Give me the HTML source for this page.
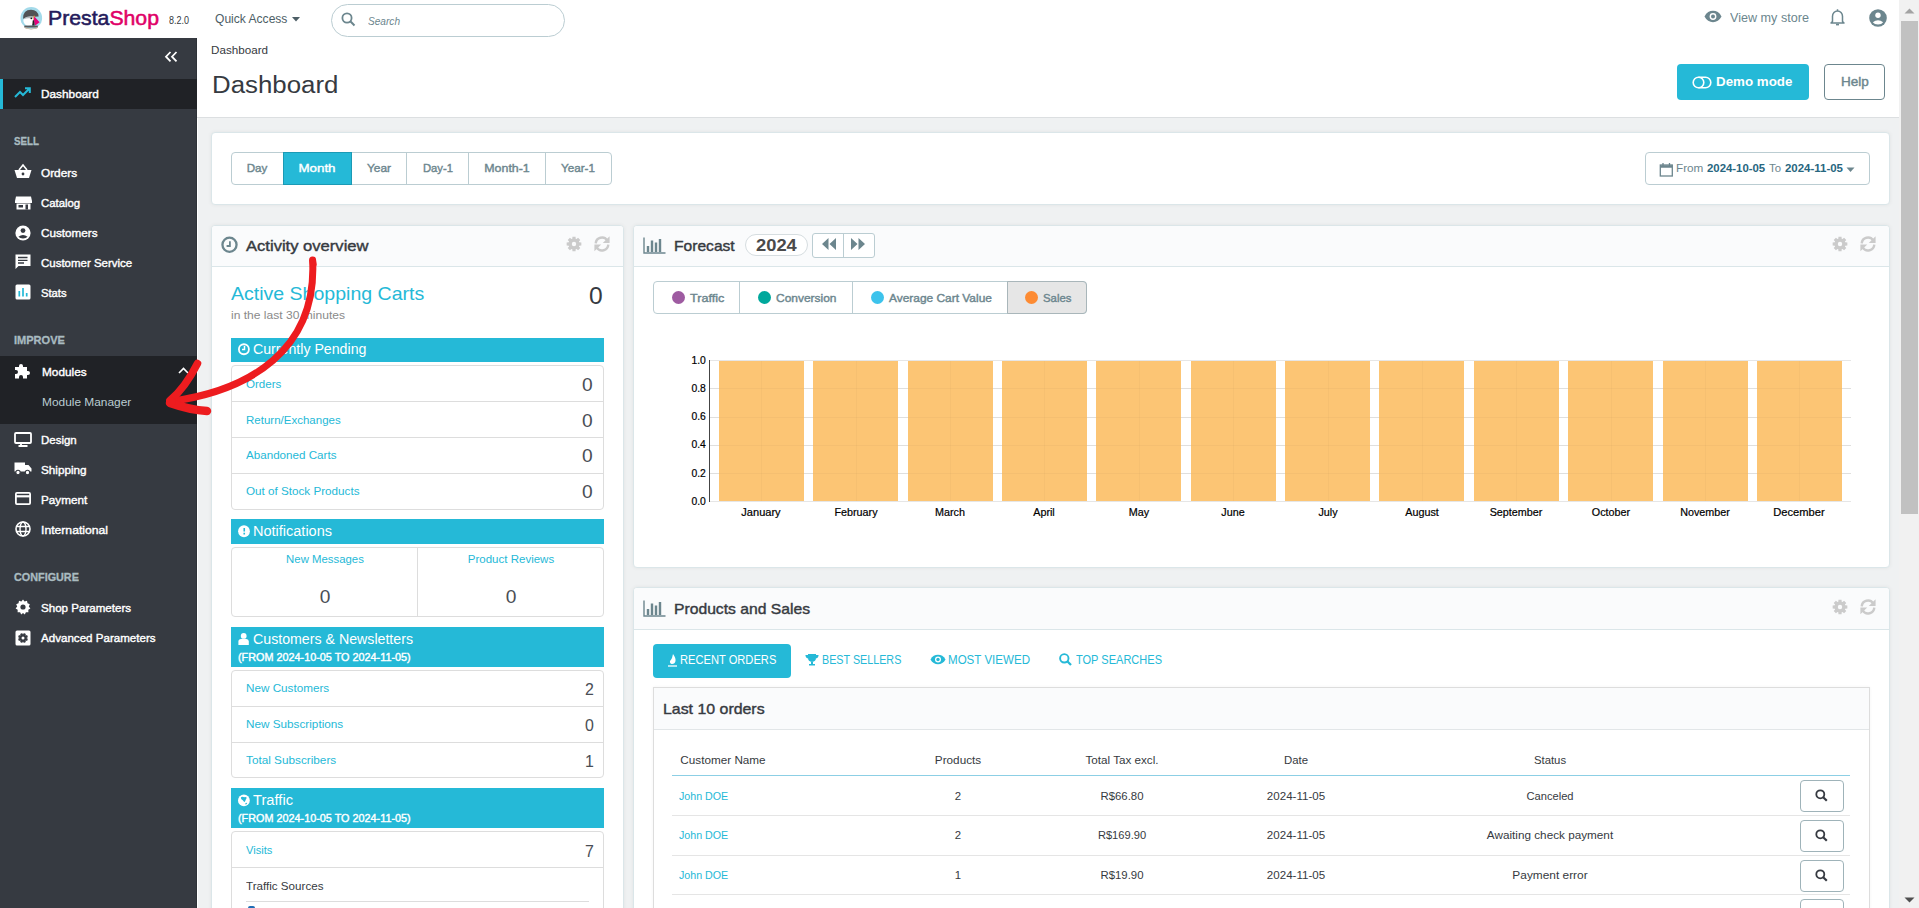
<!DOCTYPE html>
<html><head><meta charset="utf-8"><style>
*{margin:0;padding:0;box-sizing:border-box;}
html,body{width:1919px;height:908px;overflow:hidden;background:#eff1f2;font-family:"Liberation Sans",sans-serif;}
#root{position:relative;width:1919px;height:908px;overflow:hidden;background:#eff1f2;}
.t{position:absolute;white-space:nowrap;line-height:1;}
.ab{position:absolute;}
svg{position:absolute;overflow:visible;}

</style></head><body>
<div id="root">
<div class="ab" style="left:0px;top:0px;width:1899px;height:38px;background:#fff;"></div>
<div class="ab" style="left:197px;top:38px;width:1702px;height:79px;background:#fff;"></div>
<div class="ab" style="left:197px;top:117px;width:1702px;height:1px;background:#dcdfe1;"></div>
<div class="ab" style="left:197px;top:118px;width:1px;height:790px;background:#fff;"></div>
<div class="ab" style="left:0px;top:38px;width:197px;height:870px;background:#363a41;"></div>
<div class="ab" style="left:196px;top:38px;width:1px;height:870px;background:#2e3238;"></div>
<div class="ab" style="left:0px;top:79px;width:197px;height:30px;background:#202226;"></div>
<div class="ab" style="left:0px;top:79px;width:3px;height:30px;background:#25b9d7;"></div>
<div class="ab" style="left:0px;top:356px;width:197px;height:68px;background:#202226;"></div>
<div class="ab" style="left:331px;top:4px;width:234px;height:33px;border:1px solid #bbcdd2;border-radius:17px;background:#fff;"></div>
<div class="ab" style="left:1677px;top:64px;width:132px;height:36px;background:#25b9d7;border-radius:4px;"></div>
<div class="ab" style="left:1824px;top:64px;width:61px;height:36px;border:1px solid #6c868e;border-radius:4px;"></div>
<div class="ab" style="left:211px;top:132px;width:1679px;height:73px;border:1px solid #dbe6e9;border-radius:4px;background:#fff;box-shadow:0 0 4px rgba(0,0,0,.06);"></div>
<div class="ab" style="left:231px;top:152px;width:381px;height:33px;border:1px solid #bbcdd2;border-radius:4px;"></div>
<div class="ab" style="left:283px;top:152px;width:69px;height:33px;background:#25b9d7;border:1px solid #1b9ab5;"></div>
<div class="ab" style="left:406px;top:153px;width:1px;height:31px;background:#bbcdd2;"></div>
<div class="ab" style="left:468px;top:153px;width:1px;height:31px;background:#bbcdd2;"></div>
<div class="ab" style="left:545px;top:153px;width:1px;height:31px;background:#bbcdd2;"></div>
<div class="ab" style="left:1645px;top:152px;width:225px;height:33px;border:1px solid #bbcdd2;border-radius:4px;"></div>
<div class="ab" style="left:211px;top:225px;width:413px;height:700px;border:1px solid #dbe6e9;border-radius:4px;background:#fff;box-shadow:0 0 4px rgba(0,0,0,.06);"></div>
<div class="ab" style="left:212px;top:226px;width:411px;height:40px;background:#fafbfc;border-radius:3px 3px 0 0;"></div>
<div class="ab" style="left:212px;top:266px;width:411px;height:1px;background:#dbe6e9;"></div>
<div class="ab" style="left:231px;top:338px;width:373px;height:24px;background:#25b9d7;"></div>
<div class="ab" style="left:231px;top:365px;width:373px;height:145px;border:1px solid #dddddd;border-radius:4px;background:#fff;"></div>
<div class="ab" style="left:232px;top:401px;width:371px;height:1px;background:#dddddd;"></div>
<div class="ab" style="left:232px;top:437px;width:371px;height:1px;background:#dddddd;"></div>
<div class="ab" style="left:232px;top:473px;width:371px;height:1px;background:#dddddd;"></div>
<div class="ab" style="left:231px;top:519px;width:373px;height:25px;background:#25b9d7;"></div>
<div class="ab" style="left:231px;top:547px;width:373px;height:70px;border:1px solid #dddddd;border-radius:4px;background:#fff;"></div>
<div class="ab" style="left:417px;top:548px;width:1px;height:68px;background:#dddddd;"></div>
<div class="ab" style="left:231px;top:627px;width:373px;height:40px;background:#25b9d7;"></div>
<div class="ab" style="left:231px;top:670px;width:373px;height:108px;border:1px solid #dddddd;border-radius:4px;background:#fff;"></div>
<div class="ab" style="left:232px;top:706px;width:371px;height:1px;background:#dddddd;"></div>
<div class="ab" style="left:232px;top:742px;width:371px;height:1px;background:#dddddd;"></div>
<div class="ab" style="left:231px;top:788px;width:373px;height:40px;background:#25b9d7;"></div>
<div class="ab" style="left:231px;top:831px;width:373px;height:200px;border:1px solid #dddddd;border-radius:4px;background:#fff;"></div>
<div class="ab" style="left:232px;top:867px;width:371px;height:1px;background:#dddddd;"></div>
<div class="ab" style="left:246px;top:901px;width:343px;height:1px;background:#dddddd;"></div>
<div class="ab" style="left:633px;top:225px;width:1257px;height:343px;border:1px solid #dbe6e9;border-radius:4px;background:#fff;box-shadow:0 0 4px rgba(0,0,0,.06);"></div>
<div class="ab" style="left:634px;top:226px;width:1255px;height:40px;background:#fafbfc;border-radius:3px 3px 0 0;"></div>
<div class="ab" style="left:634px;top:266px;width:1255px;height:1px;background:#dbe6e9;"></div>
<div class="ab" style="left:745px;top:234px;width:63px;height:22px;border:1px solid #d6dde0;border-radius:11px;background:#fff;"></div>
<div class="ab" style="left:812px;top:233px;width:63px;height:25px;border:1px solid #bbcdd2;border-radius:3px;background:#fff;"></div>
<div class="ab" style="left:843px;top:234px;width:1px;height:23px;background:#bbcdd2;"></div>
<div class="ab" style="left:653px;top:281px;width:434px;height:33px;border:1px solid #bbcdd2;border-radius:4px;background:#fff;"></div>
<div class="ab" style="left:1007px;top:282px;width:79px;height:31px;background:#e6e6e6;border-left:1px solid #a9b6ba;border-radius:0 3px 3px 0;"></div>
<div class="ab" style="left:1007px;top:281px;width:80px;height:33px;border:1px solid #a9b6ba;border-radius:0 4px 4px 0;"></div>
<div class="ab" style="left:739px;top:282px;width:1px;height:31px;background:#bbcdd2;"></div>
<div class="ab" style="left:852px;top:282px;width:1px;height:31px;background:#bbcdd2;"></div>
<div class="ab" style="left:671.8px;top:290.5px;width:13px;height:13px;background:#9e5ba1;border-radius:50%;"></div>
<div class="ab" style="left:758.0px;top:290.5px;width:13px;height:13px;background:#00a89c;border-radius:50%;"></div>
<div class="ab" style="left:871.0px;top:290.5px;width:13px;height:13px;background:#3dc3ec;border-radius:50%;"></div>
<div class="ab" style="left:1025.0px;top:290.5px;width:13px;height:13px;background:#fd8b33;border-radius:50%;"></div>
<div class="ab" style="left:710px;top:360px;width:1141px;height:1px;background:#e6e6e6;"></div>
<div class="ab" style="left:710px;top:388px;width:1141px;height:1px;background:#e6e6e6;"></div>
<div class="ab" style="left:710px;top:417px;width:1141px;height:1px;background:#e6e6e6;"></div>
<div class="ab" style="left:710px;top:445px;width:1141px;height:1px;background:#e6e6e6;"></div>
<div class="ab" style="left:710px;top:473px;width:1141px;height:1px;background:#e6e6e6;"></div>
<div class="ab" style="left:710px;top:501px;width:1141px;height:1px;background:#e6e6e6;"></div>
<div class="ab" style="left:718.7px;top:361px;width:85px;height:140px;background:#fcc574;"></div>
<div class="ab" style="left:761px;top:361px;width:1px;height:140px;background:rgba(0,0,0,.025);"></div>
<div class="ab" style="left:813.1px;top:361px;width:85px;height:140px;background:#fcc574;"></div>
<div class="ab" style="left:856px;top:361px;width:1px;height:140px;background:rgba(0,0,0,.025);"></div>
<div class="ab" style="left:907.5px;top:361px;width:85px;height:140px;background:#fcc574;"></div>
<div class="ab" style="left:950px;top:361px;width:1px;height:140px;background:rgba(0,0,0,.025);"></div>
<div class="ab" style="left:1001.9px;top:361px;width:85px;height:140px;background:#fcc574;"></div>
<div class="ab" style="left:1044px;top:361px;width:1px;height:140px;background:rgba(0,0,0,.025);"></div>
<div class="ab" style="left:1096.3px;top:361px;width:85px;height:140px;background:#fcc574;"></div>
<div class="ab" style="left:1139px;top:361px;width:1px;height:140px;background:rgba(0,0,0,.025);"></div>
<div class="ab" style="left:1190.7px;top:361px;width:85px;height:140px;background:#fcc574;"></div>
<div class="ab" style="left:1233px;top:361px;width:1px;height:140px;background:rgba(0,0,0,.025);"></div>
<div class="ab" style="left:1285.0px;top:361px;width:85px;height:140px;background:#fcc574;"></div>
<div class="ab" style="left:1328px;top:361px;width:1px;height:140px;background:rgba(0,0,0,.025);"></div>
<div class="ab" style="left:1379.4px;top:361px;width:85px;height:140px;background:#fcc574;"></div>
<div class="ab" style="left:1422px;top:361px;width:1px;height:140px;background:rgba(0,0,0,.025);"></div>
<div class="ab" style="left:1473.8px;top:361px;width:85px;height:140px;background:#fcc574;"></div>
<div class="ab" style="left:1516px;top:361px;width:1px;height:140px;background:rgba(0,0,0,.025);"></div>
<div class="ab" style="left:1568.2px;top:361px;width:85px;height:140px;background:#fcc574;"></div>
<div class="ab" style="left:1611px;top:361px;width:1px;height:140px;background:rgba(0,0,0,.025);"></div>
<div class="ab" style="left:1662.6px;top:361px;width:85px;height:140px;background:#fcc574;"></div>
<div class="ab" style="left:1705px;top:361px;width:1px;height:140px;background:rgba(0,0,0,.025);"></div>
<div class="ab" style="left:1757.0px;top:361px;width:85px;height:140px;background:#fcc574;"></div>
<div class="ab" style="left:1799px;top:361px;width:1px;height:140px;background:rgba(0,0,0,.025);"></div>
<div class="ab" style="left:710px;top:388px;width:1141px;height:1px;background:rgba(120,100,60,.05);"></div>
<div class="ab" style="left:710px;top:417px;width:1141px;height:1px;background:rgba(120,100,60,.05);"></div>
<div class="ab" style="left:710px;top:445px;width:1141px;height:1px;background:rgba(120,100,60,.05);"></div>
<div class="ab" style="left:710px;top:473px;width:1141px;height:1px;background:rgba(120,100,60,.05);"></div>
<div class="ab" style="left:709px;top:360px;width:1px;height:142px;background:#444;"></div>
<div class="ab" style="left:633px;top:587px;width:1257px;height:400px;border:1px solid #dbe6e9;border-radius:4px;background:#fff;box-shadow:0 0 4px rgba(0,0,0,.06);"></div>
<div class="ab" style="left:634px;top:588px;width:1255px;height:41px;background:#fafbfc;border-radius:3px 3px 0 0;"></div>
<div class="ab" style="left:634px;top:629px;width:1255px;height:1px;background:#dbe6e9;"></div>
<div class="ab" style="left:653px;top:644px;width:138px;height:34px;background:#25b9d7;border-radius:4px;"></div>
<div class="ab" style="left:653px;top:687px;width:1217px;height:300px;border:1px solid #dddddd;background:#fff;box-shadow:0 0 3px rgba(0,0,0,.05);"></div>
<div class="ab" style="left:654px;top:688px;width:1215px;height:41px;background:#fafbfc;"></div>
<div class="ab" style="left:654px;top:729px;width:1215px;height:1px;background:#e2e6e8;"></div>
<div class="ab" style="left:672px;top:775px;width:1178px;height:1px;background:#8ccfe5;"></div>
<div class="ab" style="left:672px;top:815px;width:1178px;height:1px;background:#e5e5e5;"></div>
<div class="ab" style="left:672px;top:855px;width:1178px;height:1px;background:#e5e5e5;"></div>
<div class="ab" style="left:672px;top:894px;width:1178px;height:1px;background:#e5e5e5;"></div>
<div class="ab" style="left:1800px;top:780px;width:44px;height:32px;border:1px solid #9fb3b9;border-radius:4px;background:#fff;"></div>
<div class="ab" style="left:1800px;top:820px;width:44px;height:32px;border:1px solid #9fb3b9;border-radius:4px;background:#fff;"></div>
<div class="ab" style="left:1800px;top:860px;width:44px;height:32px;border:1px solid #9fb3b9;border-radius:4px;background:#fff;"></div>
<div class="ab" style="left:1800px;top:899px;width:44px;height:32px;border:1px solid #9fb3b9;border-radius:4px;background:#fff;"></div>
<div class="ab" style="left:1899px;top:0px;width:20px;height:908px;background:#f1f1f1;"></div>
<div class="ab" style="left:1901px;top:21px;width:17px;height:493px;background:#c1c1c1;"></div><svg style="left:18px;top:5px" width="26" height="26" viewBox="0 0 26 26"><circle cx="13.3" cy="12.9" r="10.8" fill="#a3daea"/>
<path d="M5 13.8 Q5 4.8 13 4.8 Q20 4.8 20.6 11.5 L16 11.8 Q11 10.5 5 13.8Z" fill="#505254"/>
<path d="M6 13.2 Q10.5 10.3 16 11.6 L15.5 14.5 Q10 12.8 6 14.5Z" fill="#b9bcbe"/>
<path d="M5.3 14.5 Q10 12.3 15.2 13.8 L15.6 18.5 Q14 21.2 9.5 20.8 Q5.3 19.5 5.3 14.5Z" fill="#ffffff"/>
<path d="M6.3 20.6 H19.8 V22.5 H6.3Z" fill="#57595b"/>
<path d="M6.5 22.3 Q13 25 20 22.3 L19 23.6 Q13 25.2 7.5 23.6Z" fill="#b9a78c"/>
<circle cx="13.3" cy="13.4" r="0.8" fill="#111"/>
<path d="M15.5 10.8H16.9V15H15.5Z" fill="#f0973c"/>
<path d="M14.8 15.2H16.6V20.5H14.2Z" fill="#222"/>
<path d="M16.4 11.4 L21.6 17.2 L17.2 20.6 L15.9 15Z" fill="#e4007a"/></svg>
<svg style="left:292px;top:17px" width="8" height="5" viewBox="0 0 8 5"><path d="M0 0H8L4 4.5Z" fill="#4d5e66"/></svg>
<svg style="left:341px;top:12px" width="15" height="15" viewBox="0 0 15 15"><circle cx="6" cy="6" r="4.6" fill="none" stroke="#6c868e" stroke-width="1.8"/><path d="M9.3 9.3L13.5 13.5" stroke="#6c868e" stroke-width="2"/></svg>
<svg style="left:1704px;top:10px" width="18" height="13" viewBox="0 0 18 13"><path d="M0.5 6.5C2.5 2.5 5.5 0.8 9 0.8S15.5 2.5 17.5 6.5C15.5 10.5 12.5 12.2 9 12.2S2.5 10.5 0.5 6.5Z" fill="#6c868e"/><circle cx="9" cy="6.5" r="3.4" fill="#fff"/><circle cx="9" cy="6.5" r="2" fill="#6c868e"/></svg>
<svg style="left:1830px;top:8px" width="15" height="18" viewBox="0 0 15 18"><path d="M7.5 1.3V2.7M2.5 13.5V8.2A5 5.3 0 0 1 12.5 8.2V13.5L14 15H1Z" fill="none" stroke="#6c868e" stroke-width="1.5" stroke-linejoin="round"/><path d="M6 16.6H9" stroke="#6c868e" stroke-width="1.6"/></svg>
<svg style="left:1869px;top:9px" width="18" height="18" viewBox="0 0 18 18"><circle cx="9" cy="9" r="8.8" fill="#6c868e"/><circle cx="9" cy="6.3" r="2.7" fill="#fff"/><path d="M3.8 13.2Q9 9.5 14.2 13.2Q12.5 15.6 9 15.6Q5.5 15.6 3.8 13.2Z" fill="#fff"/></svg>
<svg style="left:164px;top:51px" width="14" height="12" viewBox="0 0 14 12"><path d="M6.5 1L2 5.7L6.5 10.4M12.5 1L8 5.7L12.5 10.4" fill="none" stroke="#fff" stroke-width="1.8"/></svg>
<svg style="left:14px;top:87px" width="17" height="11" viewBox="0 0 17 11"><path d="M1 10L6 5L9 8L15 2M11 1.2H15.8V6" fill="none" stroke="#25b9d7" stroke-width="2"/></svg>
<svg style="left:14px;top:164px" width="18" height="15" viewBox="0 0 18 15"><path d="M5 6L9 1L13 6" fill="none" stroke="#fff" stroke-width="1.6"/><path d="M0.5 6H17.5L15 14H3Z" fill="#fff"/><circle cx="9" cy="10" r="1.4" fill="#363a41"/></svg>
<svg style="left:15px;top:196px" width="17" height="14" viewBox="0 0 17 14"><path d="M1 0.5H16L17 5V7H0V5Z" fill="#fff"/><path d="M1.5 7.5H15.5V13.5H1.5Z" fill="#fff"/><path d="M3.5 9H8V11.5H3.5Z M10.5 8.5H13V13.5H10.5Z" fill="#363a41"/></svg>
<svg style="left:15px;top:225px" width="16" height="16" viewBox="0 0 16 16"><circle cx="8" cy="8" r="7.6" fill="#fff"/><circle cx="8" cy="5.6" r="2.4" fill="#363a41"/><path d="M3.4 11.8Q8 8.3 12.6 11.8Q11 13.6 8 13.6Q5 13.6 3.4 11.8Z" fill="#363a41"/></svg>
<svg style="left:15px;top:254px" width="16" height="16" viewBox="0 0 16 16"><path d="M0.5 0.5H15.5V12H3.5L0.5 15Z" fill="#fff"/><path d="M3 3.5H12.5M3 6.3H12.5M3 9H9" stroke="#363a41" stroke-width="1.3"/></svg>
<svg style="left:15px;top:284px" width="16" height="16" viewBox="0 0 16 16"><rect x="0.5" y="0.5" width="15" height="15" rx="1.5" fill="#fff"/><path d="M4.3 7V12.5M8 4V12.5M11.7 9V12.5" stroke="#25b9d7" stroke-width="1.7"/></svg>
<svg style="left:14px;top:363px" width="18" height="16" viewBox="0 0 18 16"><path d="M1 4H5V3A2 2 0 0 1 9 3V4H13V8H14A2 2 0 0 1 14 12H13V15.5H9V14A2 2 0 0 0 5 14V15.5H1V11H2A2 2 0 0 0 2 7H1Z" fill="#fff"/></svg>
<svg style="left:178px;top:367px" width="11" height="7" viewBox="0 0 11 7"><path d="M1 6L5.5 1.5L10 6" fill="none" stroke="#fff" stroke-width="1.6"/></svg>
<svg style="left:14px;top:432px" width="18" height="15" viewBox="0 0 18 15"><rect x="1" y="1" width="16" height="10" rx="1" fill="none" stroke="#fff" stroke-width="1.8"/><path d="M7 11.5V13M4.5 14H13.5" stroke="#fff" stroke-width="1.8"/></svg>
<svg style="left:14px;top:461px" width="18" height="15" viewBox="0 0 18 15"><path d="M0.5 1.5H11V10.5H0.5Z M11 4H14.5L17.5 7.5V10.5H11Z" fill="#fff"/><circle cx="4" cy="11.5" r="2.2" fill="#fff" stroke="#363a41" stroke-width="1.1"/><circle cx="13.5" cy="11.5" r="2.2" fill="#fff" stroke="#363a41" stroke-width="1.1"/></svg>
<svg style="left:15px;top:492px" width="16" height="13" viewBox="0 0 16 13"><rect x="0.9" y="0.9" width="14.2" height="11.2" rx="1" fill="none" stroke="#fff" stroke-width="1.8"/><path d="M1 4.3H15" stroke="#fff" stroke-width="2.2"/></svg>
<svg style="left:15px;top:521px" width="16" height="16" viewBox="0 0 16 16"><circle cx="8" cy="8" r="7" fill="none" stroke="#fff" stroke-width="1.6"/><ellipse cx="8" cy="8" rx="3" ry="7" fill="none" stroke="#fff" stroke-width="1.4"/><path d="M1.5 5.5H14.5M1.5 10.5H14.5" stroke="#fff" stroke-width="1.4"/></svg>
<svg style="left:15px;top:599px" width="16" height="16" viewBox="0 0 16 16"><path d="M8 0.5L9.6 2.5L12 1.8L12.5 4.3L14.8 5.2L13.8 7.5L15.4 9.5L13.3 10.8L13.4 13.3L10.9 13.3L9.8 15.5L8 14L6.2 15.5L5.1 13.3L2.6 13.3L2.7 10.8L0.6 9.5L2.2 7.5L1.2 5.2L3.5 4.3L4 1.8L6.4 2.5Z" fill="#fff"/><circle cx="8" cy="8" r="2.6" fill="#363a41"/></svg>
<svg style="left:15px;top:630px" width="16" height="16" viewBox="0 0 16 16"><rect x="0.5" y="0.5" width="15" height="15" rx="1.5" fill="#fff"/><path d="M8.23 4.31L8.86 3.07L10.88 3.91L10.45 5.22L10.78 5.55L12.09 5.12L12.93 7.14L11.69 7.77L11.69 8.23L12.93 8.86L12.09 10.88L10.78 10.45L10.45 10.78L10.88 12.09L8.86 12.93L8.23 11.69L7.77 11.69L7.14 12.93L5.12 12.09L5.55 10.78L5.22 10.45L3.91 10.88L3.07 8.86L4.31 8.23L4.31 7.77L3.07 7.14L3.91 5.12L5.22 5.55L5.55 5.22L5.12 3.91L7.14 3.07L7.77 4.31Z" fill="#363a41"/><circle cx="8" cy="8" r="1.5" fill="#fff"/></svg>
<svg style="left:1692px;top:76px" width="20" height="13" viewBox="0 0 20 13"><circle cx="6.5" cy="6.5" r="5.3" fill="none" stroke="#fff" stroke-width="1.6"/><path d="M6.5 1.2H13.5A5.3 5.3 0 0 1 13.5 11.8H6.5" fill="none" stroke="#fff" stroke-width="1.6"/></svg>
<svg style="left:1659px;top:162px" width="15" height="15" viewBox="0 0 15 15"><rect x="1.3" y="3" width="12" height="11" fill="none" stroke="#6c868e" stroke-width="1.3"/><path d="M1.3 4.5H13.3" stroke="#6c868e" stroke-width="2.5"/><path d="M4 1V4M10.5 1V4" stroke="#6c868e" stroke-width="1.3"/></svg>
<svg style="left:1846px;top:167px" width="9" height="6" viewBox="0 0 9 6"><path d="M0.5 0.5H8.5L4.5 5Z" fill="#6c868e"/></svg>
<svg style="left:220px;top:235px" width="20" height="20" viewBox="0 0 20 20"><circle cx="9.5" cy="9.75" r="7.05" fill="none" stroke="#6c868e" stroke-width="2.3"/><path d="M9.9 6.2V11H6.6" fill="none" stroke="#6c868e" stroke-width="1.8"/></svg>
<svg style="left:566px;top:236px" width="16" height="16" viewBox="0 0 16 16"><path d="M6.32 2.76L6.44 0.66L9.56 0.66L9.68 2.76L10.52 3.11L12.08 1.71L14.29 3.92L12.89 5.48L13.24 6.32L15.34 6.44L15.34 9.56L13.24 9.68L12.89 10.52L14.29 12.08L12.08 14.29L10.52 12.89L9.68 13.24L9.56 15.34L6.44 15.34L6.32 13.24L5.48 12.89L3.92 14.29L1.71 12.08L3.11 10.52L2.76 9.68L0.66 9.56L0.66 6.44L2.76 6.32L3.11 5.48L1.71 3.92L3.92 1.71L5.48 3.11Z" fill="#cbcbcb"/><circle cx="8" cy="8" r="2.2" fill="#fafbfc"/></svg>
<svg style="left:594px;top:236px" width="16" height="16" viewBox="0 0 16 16"><path d="M1.7 7.3A6.3 6.3 0 0 1 13.2 4.3M14.3 8.7A6.3 6.3 0 0 1 2.8 11.7" fill="none" stroke="#cbcbcb" stroke-width="2.4"/><path d="M15.6 0.2V7H8.8Z M0.4 15.3V8.6H7.2Z" fill="#cbcbcb"/></svg>
<svg style="left:1832px;top:236px" width="16" height="16" viewBox="0 0 16 16"><path d="M6.32 2.76L6.44 0.66L9.56 0.66L9.68 2.76L10.52 3.11L12.08 1.71L14.29 3.92L12.89 5.48L13.24 6.32L15.34 6.44L15.34 9.56L13.24 9.68L12.89 10.52L14.29 12.08L12.08 14.29L10.52 12.89L9.68 13.24L9.56 15.34L6.44 15.34L6.32 13.24L5.48 12.89L3.92 14.29L1.71 12.08L3.11 10.52L2.76 9.68L0.66 9.56L0.66 6.44L2.76 6.32L3.11 5.48L1.71 3.92L3.92 1.71L5.48 3.11Z" fill="#cbcbcb"/><circle cx="8" cy="8" r="2.2" fill="#fafbfc"/></svg>
<svg style="left:1860px;top:236px" width="16" height="16" viewBox="0 0 16 16"><path d="M1.7 7.3A6.3 6.3 0 0 1 13.2 4.3M14.3 8.7A6.3 6.3 0 0 1 2.8 11.7" fill="none" stroke="#cbcbcb" stroke-width="2.4"/><path d="M15.6 0.2V7H8.8Z M0.4 15.3V8.6H7.2Z" fill="#cbcbcb"/></svg>
<svg style="left:1832px;top:599px" width="16" height="16" viewBox="0 0 16 16"><path d="M6.32 2.76L6.44 0.66L9.56 0.66L9.68 2.76L10.52 3.11L12.08 1.71L14.29 3.92L12.89 5.48L13.24 6.32L15.34 6.44L15.34 9.56L13.24 9.68L12.89 10.52L14.29 12.08L12.08 14.29L10.52 12.89L9.68 13.24L9.56 15.34L6.44 15.34L6.32 13.24L5.48 12.89L3.92 14.29L1.71 12.08L3.11 10.52L2.76 9.68L0.66 9.56L0.66 6.44L2.76 6.32L3.11 5.48L1.71 3.92L3.92 1.71L5.48 3.11Z" fill="#cbcbcb"/><circle cx="8" cy="8" r="2.2" fill="#fafbfc"/></svg>
<svg style="left:1860px;top:599px" width="16" height="16" viewBox="0 0 16 16"><path d="M1.7 7.3A6.3 6.3 0 0 1 13.2 4.3M14.3 8.7A6.3 6.3 0 0 1 2.8 11.7" fill="none" stroke="#cbcbcb" stroke-width="2.4"/><path d="M15.6 0.2V7H8.8Z M0.4 15.3V8.6H7.2Z" fill="#cbcbcb"/></svg>
<svg style="left:643px;top:237px" width="23" height="17" viewBox="0 0 23 17"><path d="M1 0.5V16H22.5" fill="none" stroke="#6c868e" stroke-width="1.4"/><path d="M5 9V15M9 3.5V15M13 5.5V15M17 2V15" stroke="#6c868e" stroke-width="2.4"/></svg>
<svg style="left:643px;top:600px" width="23" height="17" viewBox="0 0 23 17"><path d="M1 0.5V16H22.5" fill="none" stroke="#6c868e" stroke-width="1.4"/><path d="M5 9V15M9 3.5V15M13 5.5V15M17 2V15" stroke="#6c868e" stroke-width="2.4"/></svg>
<svg style="left:236px;top:341px" width="16" height="16" viewBox="0 0 16 16"><circle cx="7.9" cy="8.25" r="5" fill="none" stroke="#fff" stroke-width="1.8"/><path d="M8.5 5V8.6H6" fill="none" stroke="#fff" stroke-width="1.5"/></svg>
<svg style="left:236px;top:523px" width="16" height="16" viewBox="0 0 16 16"><circle cx="8" cy="8.25" r="5.9" fill="#fff"/><path d="M8.25 5V8.5M8.25 9.8V11.5" stroke="#25b9d7" stroke-width="1.6"/></svg>
<svg style="left:236px;top:630px" width="16" height="16" viewBox="0 0 16 16"><circle cx="7.7" cy="5.9" r="2.9" fill="#fff"/><path d="M2.4 15V11.5Q2.4 9 5 9H10.4Q12.8 9 12.8 11.5V15Z" fill="#fff"/></svg>
<svg style="left:236px;top:792px" width="16" height="16" viewBox="0 0 16 16"><circle cx="7.9" cy="8.4" r="5.9" fill="#fff"/><path d="M5 5.2Q6.5 4.2 8.2 5.2Q9.8 4.6 10.8 5.8Q9.8 7.5 9 9.5Q8.5 10.2 7.8 9.6Q7 8 5.4 7.2Q4.8 6.2 5 5.2Z M9.6 11Q10.6 10.6 11.2 11.2Q10.6 12.4 9.4 12.6Q9.2 11.8 9.6 11Z" fill="#25b9d7"/></svg>
<svg style="left:821px;top:237px" width="16" height="14" viewBox="0 0 16 14"><path d="M7.5 1V13L1 7Z M15 1V13L8.5 7Z" fill="#6c868e"/></svg>
<svg style="left:850px;top:237px" width="16" height="14" viewBox="0 0 16 14"><path d="M1 1V13L7.5 7Z M8.5 1V13L15 7Z" fill="#6c868e"/></svg>
<svg style="left:667px;top:653px" width="11" height="14" viewBox="0 0 11 14"><path d="M6 1Q9 5 8.5 8Q8 11 5 11Q2.5 10.5 3 8Q4 7 5 5Q5.5 3 6 1Z" fill="#fff"/><path d="M1 13H10" stroke="#fff" stroke-width="1.3"/></svg>
<svg style="left:805px;top:653px" width="14" height="13" viewBox="0 0 14 13"><path d="M3 1H11V5Q11 8.5 7 9Q3 8.5 3 5Z M0.5 2H3V5.5Q1 5 0.5 3Z M13.5 2H11V5.5Q13 5 13.5 3Z M6 9H8V11H10V12.5H4V11H6Z" fill="#25b9d7"/></svg>
<svg style="left:930px;top:654px" width="16" height="11" viewBox="0 0 16 11"><path d="M0.5 5.5C2.3 2.2 4.9 0.8 8 0.8S13.7 2.2 15.5 5.5C13.7 8.8 11.1 10.2 8 10.2S2.3 8.8 0.5 5.5Z" fill="#25b9d7"/><circle cx="8" cy="5.5" r="3" fill="#fff"/><circle cx="8" cy="5.5" r="1.7" fill="#25b9d7"/></svg>
<svg style="left:1059px;top:653px" width="13" height="13" viewBox="0 0 13 13"><circle cx="5.3" cy="5.3" r="4.2" fill="none" stroke="#25b9d7" stroke-width="1.9"/><path d="M8.3 8.3L12 12" stroke="#25b9d7" stroke-width="2.3"/></svg>
<svg style="left:1815px;top:789.0px" width="13" height="13" viewBox="0 0 13 13"><circle cx="5.3" cy="5.3" r="4" fill="none" stroke="#363a41" stroke-width="1.8"/><path d="M8.2 8.2L11.8 11.8" stroke="#363a41" stroke-width="2.2"/></svg>
<svg style="left:1815px;top:829.0px" width="13" height="13" viewBox="0 0 13 13"><circle cx="5.3" cy="5.3" r="4" fill="none" stroke="#363a41" stroke-width="1.8"/><path d="M8.2 8.2L11.8 11.8" stroke="#363a41" stroke-width="2.2"/></svg>
<svg style="left:1815px;top:869.0px" width="13" height="13" viewBox="0 0 13 13"><circle cx="5.3" cy="5.3" r="4" fill="none" stroke="#363a41" stroke-width="1.8"/><path d="M8.2 8.2L11.8 11.8" stroke="#363a41" stroke-width="2.2"/></svg>
<svg style="left:248px;top:906px" width="7" height="3" viewBox="0 0 7 3"><rect x="0" y="0" width="7" height="6" rx="2" fill="#1f6db5"/></svg>
<svg style="left:1904px;top:8px" width="11" height="6" viewBox="0 0 11 6"><path d="M0.5 5.5L5.5 0.5L10.5 5.5Z" fill="#a3a3a3"/></svg>
<svg style="left:1904px;top:897px" width="11" height="6" viewBox="0 0 11 6"><path d="M0.5 0.5L5.5 5.5L10.5 0.5Z" fill="#505050"/></svg>
<span id="t0" class="t" style="left:47.5px;top:7.02px;font-size:21px;font-weight:400;font-style:normal;color:#251b5b;transform:scaleX(1.0114);transform-origin:left;-webkit-text-stroke:0.55px #251b5b;">Presta<span style="color:#df0067;-webkit-text-stroke:0.55px #df0067">Shop</span></span>
<span id="t1" class="t" style="left:169px;top:16.01px;font-size:10px;font-weight:400;font-style:normal;color:#363a41;transform:scaleX(0.8989);transform-origin:left;">8.2.0</span>
<span id="t2" class="t" style="left:215.4px;top:13.01px;font-size:12.3px;font-weight:400;font-style:normal;color:#4d5e66;transform:scaleX(0.9809);transform-origin:left;">Quick Access</span>
<span id="t3" class="t" style="left:368px;top:16.00px;font-size:11px;font-weight:400;font-style:italic;color:#6c868e;transform:scaleX(0.9180);transform-origin:left;">Search</span>
<span id="t4" class="t" style="left:1730.4px;top:12.00px;font-size:12.3px;font-weight:400;font-style:normal;color:#6c868e;transform:scaleX(1.0247);transform-origin:left;">View my store</span>
<span id="t5" class="t" style="left:40.7px;top:89.00px;font-size:11.8px;font-weight:400;font-style:normal;color:#ffffff;transform:scaleX(1.0014);transform-origin:left;-webkit-text-stroke:0.4px #ffffff;">Dashboard</span>
<span id="t6" class="t" style="left:14px;top:136.00px;font-size:11px;font-weight:700;font-style:normal;color:#a9bbc0;transform:scaleX(0.8889);transform-origin:left;-webkit-text-stroke:0.3px #a9bbc0;">SELL</span>
<span id="t7" class="t" style="left:41.4px;top:168.01px;font-size:11.8px;font-weight:400;font-style:normal;color:#ffffff;transform:scaleX(1.0010);transform-origin:left;-webkit-text-stroke:0.4px #ffffff;">Orders</span>
<span id="t8" class="t" style="left:41.4px;top:198.01px;font-size:11.8px;font-weight:400;font-style:normal;color:#ffffff;transform:scaleX(0.9638);transform-origin:left;-webkit-text-stroke:0.4px #ffffff;">Catalog</span>
<span id="t9" class="t" style="left:41.4px;top:228.01px;font-size:11.8px;font-weight:400;font-style:normal;color:#ffffff;transform:scaleX(0.9922);transform-origin:left;-webkit-text-stroke:0.4px #ffffff;">Customers</span>
<span id="t10" class="t" style="left:41.4px;top:258.01px;font-size:11.8px;font-weight:400;font-style:normal;color:#ffffff;transform:scaleX(0.9728);transform-origin:left;-webkit-text-stroke:0.4px #ffffff;">Customer Service</span>
<span id="t11" class="t" style="left:41.4px;top:288.01px;font-size:11.8px;font-weight:400;font-style:normal;color:#ffffff;transform:scaleX(0.9520);transform-origin:left;-webkit-text-stroke:0.4px #ffffff;">Stats</span>
<span id="t12" class="t" style="left:14.3px;top:335.00px;font-size:11px;font-weight:700;font-style:normal;color:#a9bbc0;transform:scaleX(1.0033);transform-origin:left;-webkit-text-stroke:0.3px #a9bbc0;">IMPROVE</span>
<span id="t13" class="t" style="left:41.6px;top:367.01px;font-size:11.8px;font-weight:400;font-style:normal;color:#ffffff;transform:scaleX(1.0001);transform-origin:left;-webkit-text-stroke:0.4px #ffffff;">Modules</span>
<span id="t14" class="t" style="left:41.6px;top:397.01px;font-size:11.8px;font-weight:400;font-style:normal;color:#bbcdd2;transform:scaleX(1.0087);transform-origin:left;">Module Manager</span>
<span id="t15" class="t" style="left:41.4px;top:435.01px;font-size:11.8px;font-weight:400;font-style:normal;color:#ffffff;transform:scaleX(0.9718);transform-origin:left;-webkit-text-stroke:0.4px #ffffff;">Design</span>
<span id="t16" class="t" style="left:41.4px;top:465.01px;font-size:11.8px;font-weight:400;font-style:normal;color:#ffffff;transform:scaleX(0.9930);transform-origin:left;-webkit-text-stroke:0.4px #ffffff;">Shipping</span>
<span id="t17" class="t" style="left:41.4px;top:495.00px;font-size:11.8px;font-weight:400;font-style:normal;color:#ffffff;transform:scaleX(0.9944);transform-origin:left;-webkit-text-stroke:0.4px #ffffff;">Payment</span>
<span id="t18" class="t" style="left:41.4px;top:525.01px;font-size:11.8px;font-weight:400;font-style:normal;color:#ffffff;transform:scaleX(1.0318);transform-origin:left;-webkit-text-stroke:0.4px #ffffff;">International</span>
<span id="t19" class="t" style="left:14px;top:572.01px;font-size:11px;font-weight:700;font-style:normal;color:#a9bbc0;transform:scaleX(0.9833);transform-origin:left;-webkit-text-stroke:0.3px #a9bbc0;">CONFIGURE</span>
<span id="t20" class="t" style="left:41.4px;top:603.01px;font-size:11.8px;font-weight:400;font-style:normal;color:#ffffff;transform:scaleX(0.9813);transform-origin:left;-webkit-text-stroke:0.4px #ffffff;">Shop Parameters</span>
<span id="t21" class="t" style="left:41.4px;top:633.01px;font-size:11.8px;font-weight:400;font-style:normal;color:#ffffff;transform:scaleX(0.9817);transform-origin:left;-webkit-text-stroke:0.4px #ffffff;">Advanced Parameters</span>
<span id="t22" class="t" style="left:211.4px;top:45.00px;font-size:11px;font-weight:400;font-style:normal;color:#363a41;transform:scaleX(1.0589);transform-origin:left;">Dashboard</span>
<span id="t23" class="t" style="left:211.6px;top:73.01px;font-size:24.7px;font-weight:400;font-style:normal;color:#363a41;transform:scaleX(1.0473);transform-origin:left;">Dashboard</span>
<span id="t24" class="t" style="left:1716px;top:75.00px;font-size:13px;font-weight:700;font-style:normal;color:#ffffff;transform:scaleX(1.0268);transform-origin:left;">Demo mode</span>
<span id="t25" class="t" style="left:1840.6px;top:75.00px;font-size:13px;font-weight:400;font-style:normal;color:#6c868e;transform:scaleX(1.0430);transform-origin:left;-webkit-text-stroke:0.4px #6c868e;">Help</span>
<span id="t26" class="t" style="left:-242.8px;width:1000px;text-align:center;top:162.01px;font-size:11.6px;font-weight:400;font-style:normal;color:#6c868e;transform:scaleX(0.9988);transform-origin:center;-webkit-text-stroke:0.4px #6c868e;">Day</span>
<span id="t27" class="t" style="left:-183px;width:1000px;text-align:center;top:162.01px;font-size:11.6px;font-weight:400;font-style:normal;color:#ffffff;transform:scaleX(1.1509);transform-origin:center;-webkit-text-stroke:0.4px #ffffff;">Month</span>
<span id="t28" class="t" style="left:-121px;width:1000px;text-align:center;top:162.01px;font-size:11.6px;font-weight:400;font-style:normal;color:#6c868e;transform:scaleX(1.0283);transform-origin:center;-webkit-text-stroke:0.4px #6c868e;">Year</span>
<span id="t29" class="t" style="left:-62.19999999999999px;width:1000px;text-align:center;top:162.01px;font-size:11.6px;font-weight:400;font-style:normal;color:#6c868e;transform:scaleX(0.9697);transform-origin:center;-webkit-text-stroke:0.4px #6c868e;">Day-1</span>
<span id="t30" class="t" style="left:7.199999999999989px;width:1000px;text-align:center;top:162.01px;font-size:11.6px;font-weight:400;font-style:normal;color:#6c868e;transform:scaleX(1.0698);transform-origin:center;-webkit-text-stroke:0.4px #6c868e;">Month-1</span>
<span id="t31" class="t" style="left:78.20000000000005px;width:1000px;text-align:center;top:162.01px;font-size:11.6px;font-weight:400;font-style:normal;color:#6c868e;transform:scaleX(1.0079);transform-origin:center;-webkit-text-stroke:0.4px #6c868e;">Year-1</span>
<span id="t32" class="t" style="left:1676px;top:163.00px;font-size:11.5px;font-weight:400;font-style:normal;color:#6c868e;transform:scaleX(1.0207);transform-origin:left;">From</span>
<span id="t33" class="t" style="left:1707.2px;top:163.00px;font-size:11.5px;font-weight:700;font-style:normal;color:#276680;transform:scaleX(0.9893);transform-origin:left;">2024-10-05</span>
<span id="t34" class="t" style="left:1769.2px;top:163.00px;font-size:11.5px;font-weight:400;font-style:normal;color:#6c868e;transform:scaleX(0.9871);transform-origin:left;">To</span>
<span id="t35" class="t" style="left:1785px;top:163.00px;font-size:11.5px;font-weight:700;font-style:normal;color:#276680;transform:scaleX(0.9965);transform-origin:left;">2024-11-05</span>
<span id="t36" class="t" style="left:246px;top:238.02px;font-size:15px;font-weight:400;font-style:normal;color:#363a41;transform:scaleX(1.1050);transform-origin:left;-webkit-text-stroke:0.4px #363a41;">Activity overview</span>
<span id="t37" class="t" style="left:231.1px;top:285.01px;font-size:18.5px;font-weight:400;font-style:normal;color:#25b9d7;transform:scaleX(1.0555);transform-origin:left;">Active Shopping Carts</span>
<span id="t38" class="t" style="right:1316px;top:284.01px;font-size:24.5px;font-weight:400;font-style:normal;color:#363a41;transform:scaleX(1.0044);transform-origin:right;">0</span>
<span id="t39" class="t" style="left:231.1px;top:310.01px;font-size:11px;font-weight:400;font-style:normal;color:#8a8a8a;transform:scaleX(1.0966);transform-origin:left;">in the last 30 minutes</span>
<span id="t40" class="t" style="left:253.3px;top:342.01px;font-size:14px;font-weight:400;font-style:normal;color:#ffffff;transform:scaleX(1.0119);transform-origin:left;">Currently Pending</span>
<span id="t41" class="t" style="left:246.3px;top:379.01px;font-size:11.3px;font-weight:400;font-style:normal;color:#25b9d7;transform:scaleX(1.0252);transform-origin:left;">Orders</span>
<span id="t42" class="t" style="right:1326.2px;top:375.01px;font-size:19px;font-weight:400;font-style:normal;color:#4a4e55;transform:scaleX(1.0079);transform-origin:right;">0</span>
<span id="t43" class="t" style="left:246.3px;top:415.01px;font-size:11.3px;font-weight:400;font-style:normal;color:#25b9d7;transform:scaleX(1.0188);transform-origin:left;">Return/Exchanges</span>
<span id="t44" class="t" style="right:1326.2px;top:411.01px;font-size:19px;font-weight:400;font-style:normal;color:#4a4e55;transform:scaleX(1.0079);transform-origin:right;">0</span>
<span id="t45" class="t" style="left:246.3px;top:450.01px;font-size:11.3px;font-weight:400;font-style:normal;color:#25b9d7;transform:scaleX(1.0291);transform-origin:left;">Abandoned Carts</span>
<span id="t46" class="t" style="right:1326.2px;top:446.01px;font-size:19px;font-weight:400;font-style:normal;color:#4a4e55;transform:scaleX(1.0079);transform-origin:right;">0</span>
<span id="t47" class="t" style="left:246.3px;top:486.02px;font-size:11.3px;font-weight:400;font-style:normal;color:#25b9d7;transform:scaleX(1.0328);transform-origin:left;">Out of Stock Products</span>
<span id="t48" class="t" style="right:1326.2px;top:482.00px;font-size:19px;font-weight:400;font-style:normal;color:#4a4e55;transform:scaleX(1.0079);transform-origin:right;">0</span>
<span id="t49" class="t" style="left:253.3px;top:524.01px;font-size:14px;font-weight:400;font-style:normal;color:#ffffff;transform:scaleX(1.0359);transform-origin:left;">Notifications</span>
<span id="t50" class="t" style="left:-175.5px;width:1000px;text-align:center;top:554.01px;font-size:11.3px;font-weight:400;font-style:normal;color:#25b9d7;transform:scaleX(1.0073);transform-origin:center;">New Messages</span>
<span id="t51" class="t" style="left:10.600000000000023px;width:1000px;text-align:center;top:554.01px;font-size:11.3px;font-weight:400;font-style:normal;color:#25b9d7;transform:scaleX(1.0193);transform-origin:center;">Product Reviews</span>
<span id="t52" class="t" style="left:-175.5px;width:1000px;text-align:center;top:587.01px;font-size:19px;font-weight:400;font-style:normal;color:#4a4e55;transform:scaleX(1.0079);transform-origin:center;">0</span>
<span id="t53" class="t" style="left:10.5px;width:1000px;text-align:center;top:587.01px;font-size:19px;font-weight:400;font-style:normal;color:#4a4e55;transform:scaleX(1.0079);transform-origin:center;">0</span>
<span id="t54" class="t" style="left:252.5px;top:632.00px;font-size:14px;font-weight:400;font-style:normal;color:#ffffff;transform:scaleX(1.0131);transform-origin:left;">Customers & Newsletters</span>
<span id="t55" class="t" style="left:238.3px;top:652.01px;font-size:10.8px;font-weight:400;font-style:normal;color:#ffffff;transform:scaleX(1.0027);transform-origin:left;-webkit-text-stroke:0.4px #ffffff;">(FROM 2024-10-05 TO 2024-11-05)</span>
<span id="t56" class="t" style="left:246.3px;top:683.02px;font-size:11.3px;font-weight:400;font-style:normal;color:#25b9d7;transform:scaleX(1.0353);transform-origin:left;">New Customers</span>
<span id="t57" class="t" style="right:1325.2px;top:682.00px;font-size:15.8px;font-weight:400;font-style:normal;color:#4a4e55;transform:scaleX(1.0079);transform-origin:right;">2</span>
<span id="t58" class="t" style="left:246.3px;top:719.02px;font-size:11.3px;font-weight:400;font-style:normal;color:#25b9d7;transform:scaleX(1.0389);transform-origin:left;">New Subscriptions</span>
<span id="t59" class="t" style="right:1325.2px;top:718.00px;font-size:15.8px;font-weight:400;font-style:normal;color:#4a4e55;transform:scaleX(1.0079);transform-origin:right;">0</span>
<span id="t60" class="t" style="left:246.3px;top:755.01px;font-size:11.3px;font-weight:400;font-style:normal;color:#25b9d7;transform:scaleX(1.0409);transform-origin:left;">Total Subscribers</span>
<span id="t61" class="t" style="right:1325.2px;top:754.00px;font-size:15.8px;font-weight:400;font-style:normal;color:#4a4e55;transform:scaleX(1.0079);transform-origin:right;">1</span>
<span id="t62" class="t" style="left:252.8px;top:793.01px;font-size:14px;font-weight:400;font-style:normal;color:#ffffff;transform:scaleX(1.0492);transform-origin:left;">Traffic</span>
<span id="t63" class="t" style="left:238.3px;top:813.00px;font-size:10.8px;font-weight:400;font-style:normal;color:#ffffff;transform:scaleX(1.0027);transform-origin:left;-webkit-text-stroke:0.4px #ffffff;">(FROM 2024-10-05 TO 2024-11-05)</span>
<span id="t64" class="t" style="left:246.3px;top:845.01px;font-size:11.3px;font-weight:400;font-style:normal;color:#25b9d7;transform:scaleX(0.9852);transform-origin:left;">Visits</span>
<span id="t65" class="t" style="right:1325.2px;top:844.00px;font-size:15.8px;font-weight:400;font-style:normal;color:#4a4e55;transform:scaleX(1.0079);transform-origin:right;">7</span>
<span id="t66" class="t" style="left:246.3px;top:881.02px;font-size:11.3px;font-weight:400;font-style:normal;color:#363a41;transform:scaleX(1.0286);transform-origin:left;">Traffic Sources</span>
<span id="t67" class="t" style="left:673.8px;top:238.01px;font-size:15px;font-weight:400;font-style:normal;color:#363a41;transform:scaleX(1.0401);transform-origin:left;-webkit-text-stroke:0.4px #363a41;">Forecast</span>
<span id="t68" class="t" style="left:756px;top:237.00px;font-size:16.5px;font-weight:700;font-style:normal;color:#4a4a4a;transform:scaleX(1.1111);transform-origin:left;">2024</span>
<span id="t69" class="t" style="left:689.5px;top:293.01px;font-size:11.3px;font-weight:400;font-style:normal;color:#6c868e;transform:scaleX(1.1149);transform-origin:left;-webkit-text-stroke:0.4px #6c868e;">Traffic</span>
<span id="t70" class="t" style="left:776px;top:293.01px;font-size:11.3px;font-weight:400;font-style:normal;color:#6c868e;transform:scaleX(1.0585);transform-origin:left;-webkit-text-stroke:0.4px #6c868e;">Conversion</span>
<span id="t71" class="t" style="left:888.5px;top:293.01px;font-size:11.3px;font-weight:400;font-style:normal;color:#6c868e;transform:scaleX(1.0549);transform-origin:left;-webkit-text-stroke:0.4px #6c868e;">Average Cart Value</span>
<span id="t72" class="t" style="left:1043px;top:293.01px;font-size:11.3px;font-weight:400;font-style:normal;color:#6c868e;transform:scaleX(1.0048);transform-origin:left;-webkit-text-stroke:0.4px #6c868e;">Sales</span>
<span id="t73" class="t" style="right:1213.2px;top:355.01px;font-size:10.7px;font-weight:400;font-style:normal;color:#000000;transform:scaleX(0.9691);transform-origin:right;-webkit-text-stroke:0.2px #000;">1.0</span>
<span id="t74" class="t" style="right:1213.2px;top:383.00px;font-size:10.7px;font-weight:400;font-style:normal;color:#000000;transform:scaleX(0.9691);transform-origin:right;-webkit-text-stroke:0.2px #000;">0.8</span>
<span id="t75" class="t" style="right:1213.2px;top:411.01px;font-size:10.7px;font-weight:400;font-style:normal;color:#000000;transform:scaleX(0.9691);transform-origin:right;-webkit-text-stroke:0.2px #000;">0.6</span>
<span id="t76" class="t" style="right:1213.2px;top:439.01px;font-size:10.7px;font-weight:400;font-style:normal;color:#000000;transform:scaleX(0.9691);transform-origin:right;-webkit-text-stroke:0.2px #000;">0.4</span>
<span id="t77" class="t" style="right:1213.2px;top:468.01px;font-size:10.7px;font-weight:400;font-style:normal;color:#000000;transform:scaleX(0.9691);transform-origin:right;-webkit-text-stroke:0.2px #000;">0.2</span>
<span id="t78" class="t" style="right:1213.2px;top:496.02px;font-size:10.7px;font-weight:400;font-style:normal;color:#000000;transform:scaleX(0.9691);transform-origin:right;-webkit-text-stroke:0.2px #000;">0.0</span>
<span id="t79" class="t" style="left:261.20000000000005px;width:1000px;text-align:center;top:507.00px;font-size:10.7px;font-weight:400;font-style:normal;color:#000000;transform:scaleX(1.0334);transform-origin:center;-webkit-text-stroke:0.2px #000;">January</span>
<span id="t80" class="t" style="left:355.59000000000003px;width:1000px;text-align:center;top:507.00px;font-size:10.7px;font-weight:400;font-style:normal;color:#000000;transform:scaleX(1.0079);transform-origin:center;-webkit-text-stroke:0.2px #000;">February</span>
<span id="t81" class="t" style="left:449.98px;width:1000px;text-align:center;top:507.00px;font-size:10.7px;font-weight:400;font-style:normal;color:#000000;transform:scaleX(1.0079);transform-origin:center;-webkit-text-stroke:0.2px #000;">March</span>
<span id="t82" class="t" style="left:544.3700000000001px;width:1000px;text-align:center;top:507.00px;font-size:10.7px;font-weight:400;font-style:normal;color:#000000;transform:scaleX(1.0079);transform-origin:center;-webkit-text-stroke:0.2px #000;">April</span>
<span id="t83" class="t" style="left:638.76px;width:1000px;text-align:center;top:507.00px;font-size:10.7px;font-weight:400;font-style:normal;color:#000000;transform:scaleX(1.0079);transform-origin:center;-webkit-text-stroke:0.2px #000;">May</span>
<span id="t84" class="t" style="left:733.1500000000001px;width:1000px;text-align:center;top:507.00px;font-size:10.7px;font-weight:400;font-style:normal;color:#000000;transform:scaleX(1.0079);transform-origin:center;-webkit-text-stroke:0.2px #000;">June</span>
<span id="t85" class="t" style="left:827.54px;width:1000px;text-align:center;top:507.00px;font-size:10.7px;font-weight:400;font-style:normal;color:#000000;transform:scaleX(1.0079);transform-origin:center;-webkit-text-stroke:0.2px #000;">July</span>
<span id="t86" class="t" style="left:921.9300000000001px;width:1000px;text-align:center;top:507.00px;font-size:10.7px;font-weight:400;font-style:normal;color:#000000;transform:scaleX(1.0079);transform-origin:center;-webkit-text-stroke:0.2px #000;">August</span>
<span id="t87" class="t" style="left:1016.3200000000002px;width:1000px;text-align:center;top:507.00px;font-size:10.7px;font-weight:400;font-style:normal;color:#000000;transform:scaleX(1.0079);transform-origin:center;-webkit-text-stroke:0.2px #000;">September</span>
<span id="t88" class="t" style="left:1110.71px;width:1000px;text-align:center;top:507.00px;font-size:10.7px;font-weight:400;font-style:normal;color:#000000;transform:scaleX(1.0079);transform-origin:center;-webkit-text-stroke:0.2px #000;">October</span>
<span id="t89" class="t" style="left:1205.1px;width:1000px;text-align:center;top:507.00px;font-size:10.7px;font-weight:400;font-style:normal;color:#000000;transform:scaleX(1.0079);transform-origin:center;-webkit-text-stroke:0.2px #000;">November</span>
<span id="t90" class="t" style="left:1299.49px;width:1000px;text-align:center;top:507.00px;font-size:10.7px;font-weight:400;font-style:normal;color:#000000;transform:scaleX(1.0444);transform-origin:center;-webkit-text-stroke:0.2px #000;">December</span>
<span id="t91" class="t" style="left:673.8px;top:601.01px;font-size:15px;font-weight:400;font-style:normal;color:#363a41;transform:scaleX(1.0455);transform-origin:left;-webkit-text-stroke:0.4px #363a41;">Products and Sales</span>
<span id="t92" class="t" style="left:680px;top:654.02px;font-size:12.4px;font-weight:400;font-style:normal;color:#ffffff;transform:scaleX(0.8986);transform-origin:left;">RECENT ORDERS</span>
<span id="t93" class="t" style="left:822px;top:654.02px;font-size:12.4px;font-weight:400;font-style:normal;color:#25b9d7;transform:scaleX(0.8679);transform-origin:left;">BEST SELLERS</span>
<span id="t94" class="t" style="left:948px;top:654.02px;font-size:12.4px;font-weight:400;font-style:normal;color:#25b9d7;transform:scaleX(0.9330);transform-origin:left;">MOST VIEWED</span>
<span id="t95" class="t" style="left:1076.3px;top:654.02px;font-size:12.4px;font-weight:400;font-style:normal;color:#25b9d7;transform:scaleX(0.8899);transform-origin:left;">TOP SEARCHES</span>
<span id="t96" class="t" style="left:663.4px;top:701.01px;font-size:15px;font-weight:400;font-style:normal;color:#363a41;transform:scaleX(1.0595);transform-origin:left;-webkit-text-stroke:0.4px #363a41;">Last 10 orders</span>
<span id="t97" class="t" style="left:222.70000000000005px;width:1000px;text-align:center;top:755.01px;font-size:11.3px;font-weight:400;font-style:normal;color:#363a41;transform:scaleX(1.0371);transform-origin:center;">Customer Name</span>
<span id="t98" class="t" style="left:458.4px;width:1000px;text-align:center;top:755.01px;font-size:11.3px;font-weight:400;font-style:normal;color:#363a41;transform:scaleX(1.0383);transform-origin:center;">Products</span>
<span id="t99" class="t" style="left:621.9000000000001px;width:1000px;text-align:center;top:755.01px;font-size:11.3px;font-weight:400;font-style:normal;color:#363a41;transform:scaleX(1.0332);transform-origin:center;">Total Tax excl.</span>
<span id="t100" class="t" style="left:796px;width:1000px;text-align:center;top:755.01px;font-size:11.3px;font-weight:400;font-style:normal;color:#363a41;transform:scaleX(1.0079);transform-origin:center;">Date</span>
<span id="t101" class="t" style="left:1049.9px;width:1000px;text-align:center;top:755.01px;font-size:11.3px;font-weight:400;font-style:normal;color:#363a41;transform:scaleX(1.0053);transform-origin:center;">Status</span>
<span id="t102" class="t" style="left:678.8px;top:791.01px;font-size:11.3px;font-weight:400;font-style:normal;color:#25b9d7;transform:scaleX(0.9439);transform-origin:left;">John DOE</span>
<span id="t103" class="t" style="left:458.4px;width:1000px;text-align:center;top:791.01px;font-size:11.3px;font-weight:400;font-style:normal;color:#363a41;transform:scaleX(1.0079);transform-origin:center;">2</span>
<span id="t104" class="t" style="left:621.9000000000001px;width:1000px;text-align:center;top:791.01px;font-size:11.3px;font-weight:400;font-style:normal;color:#363a41;transform:scaleX(1.0079);transform-origin:center;">R$66.80</span>
<span id="t105" class="t" style="left:796px;width:1000px;text-align:center;top:791.01px;font-size:11.3px;font-weight:400;font-style:normal;color:#363a41;transform:scaleX(1.0236);transform-origin:center;">2024-11-05</span>
<span id="t106" class="t" style="left:1049.9px;width:1000px;text-align:center;top:791.01px;font-size:11.3px;font-weight:400;font-style:normal;color:#363a41;transform:scaleX(0.9867);transform-origin:center;">Canceled</span>
<span id="t107" class="t" style="left:678.8px;top:830.02px;font-size:11.3px;font-weight:400;font-style:normal;color:#25b9d7;transform:scaleX(0.9439);transform-origin:left;">John DOE</span>
<span id="t108" class="t" style="left:458.4px;width:1000px;text-align:center;top:830.02px;font-size:11.3px;font-weight:400;font-style:normal;color:#363a41;transform:scaleX(1.0079);transform-origin:center;">2</span>
<span id="t109" class="t" style="left:621.9000000000001px;width:1000px;text-align:center;top:830.02px;font-size:11.3px;font-weight:400;font-style:normal;color:#363a41;transform:scaleX(0.9837);transform-origin:center;">R$169.90</span>
<span id="t110" class="t" style="left:796px;width:1000px;text-align:center;top:830.02px;font-size:11.3px;font-weight:400;font-style:normal;color:#363a41;transform:scaleX(1.0236);transform-origin:center;">2024-11-05</span>
<span id="t111" class="t" style="left:1049.9px;width:1000px;text-align:center;top:830.02px;font-size:11.3px;font-weight:400;font-style:normal;color:#363a41;transform:scaleX(1.0384);transform-origin:center;">Awaiting check payment</span>
<span id="t112" class="t" style="left:678.8px;top:870.01px;font-size:11.3px;font-weight:400;font-style:normal;color:#25b9d7;transform:scaleX(0.9439);transform-origin:left;">John DOE</span>
<span id="t113" class="t" style="left:458.4px;width:1000px;text-align:center;top:870.01px;font-size:11.3px;font-weight:400;font-style:normal;color:#363a41;transform:scaleX(1.0079);transform-origin:center;">1</span>
<span id="t114" class="t" style="left:621.9000000000001px;width:1000px;text-align:center;top:870.01px;font-size:11.3px;font-weight:400;font-style:normal;color:#363a41;transform:scaleX(1.0079);transform-origin:center;">R$19.90</span>
<span id="t115" class="t" style="left:796px;width:1000px;text-align:center;top:870.01px;font-size:11.3px;font-weight:400;font-style:normal;color:#363a41;transform:scaleX(1.0236);transform-origin:center;">2024-11-05</span>
<span id="t116" class="t" style="left:1049.9px;width:1000px;text-align:center;top:870.01px;font-size:11.3px;font-weight:400;font-style:normal;color:#363a41;transform:scaleX(1.0520);transform-origin:center;">Payment error</span>
<svg style="left:0;top:0" width="1919" height="908" viewBox="0 0 1919 908">
<path d="M312.6 260 C317.4 349.8 249.9 390.7 170 401.5" fill="none" stroke="#ed1c1f" stroke-width="7" stroke-linecap="round"/>
<path d="M312.6 259.5 L313.5 266" stroke="#ed1c1f" stroke-width="6.6" stroke-linecap="butt"/>
<path d="M197.5 363.5 Q185 388 170 400.5" fill="none" stroke="#ed1c1f" stroke-width="7.5" stroke-linecap="round"/>
<path d="M170 403 Q190 410 207 411" fill="none" stroke="#ed1c1f" stroke-width="8.5" stroke-linecap="round"/>
<circle cx="171" cy="402" r="5" fill="#ed1c1f"/>
</svg>

</div>
</body></html>
